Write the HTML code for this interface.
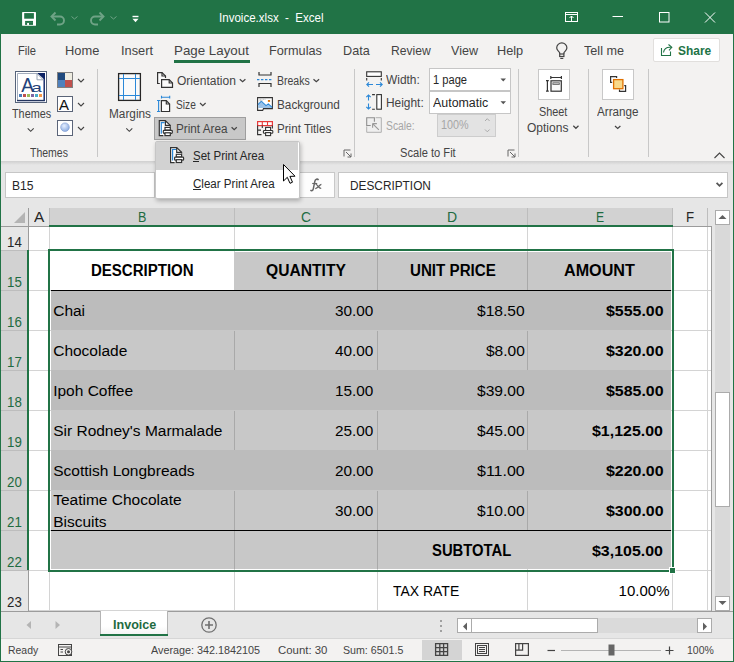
<!DOCTYPE html>
<html><head><meta charset="utf-8"><style>
*{margin:0;padding:0;box-sizing:border-box}
html,body{width:734px;height:662px;overflow:hidden;background:#f3f2f1}
body{position:relative;font-family:"Liberation Sans",sans-serif}
.a{position:absolute}
.t{position:absolute;white-space:pre;line-height:1;font-family:"Liberation Sans",sans-serif;transform-origin:0 0}
svg{position:absolute;overflow:visible}

</style></head><body>
<div class="a" style="left:0px;top:0px;width:734px;height:662px;background:#f3f2f1"></div>
<div class="a" style="left:0px;top:0px;width:734px;height:34px;background:#217346"></div>
<div class="a" style="left:174px;top:60px;width:76px;height:3px;background:#217346"></div>
<div class="a" style="left:653px;top:38px;width:67px;height:24px;background:#fff;border:1px solid #e1dfdd;border-radius:2px"></div>
<div class="a" style="left:97px;top:69px;width:1px;height:88px;background:#c8c8c8"></div>
<div class="a" style="left:354px;top:69px;width:1px;height:88px;background:#c8c8c8"></div>
<div class="a" style="left:518px;top:69px;width:1px;height:88px;background:#c8c8c8"></div>
<div class="a" style="left:588px;top:69px;width:1px;height:88px;background:#c8c8c8"></div>
<div class="a" style="left:648px;top:69px;width:1px;height:88px;background:#c8c8c8"></div>
<div class="a" style="left:1px;top:161px;width:732px;height:47px;background:#e6e6e6"></div>
<div class="a" style="left:1px;top:161px;width:732px;height:4px;background:linear-gradient(#cfcfcf,#e6e6e6)"></div>
<div class="a" style="left:5px;top:172px;width:150px;height:26px;background:#fff;border:1px solid #c6c6c6"></div>
<div class="a" style="left:299px;top:172px;width:36px;height:26px;background:#fdfdfd;border:1px solid #c8c8c8"></div>
<div class="a" style="left:338px;top:172px;width:390px;height:26px;background:#fff;border:1px solid #c6c6c6"></div>
<div class="a" style="left:1px;top:208px;width:711px;height:403px;background:#fff"></div>
<div class="a" style="left:1px;top:208px;width:711px;height:18px;background:#e6e6e6"></div>
<div class="a" style="left:49px;top:208px;width:623px;height:18px;background:#d2d2d2"></div>
<div class="a" style="left:1px;top:226px;width:27px;height:385px;background:#e6e6e6"></div>
<div class="a" style="left:1px;top:250px;width:27px;height:320px;background:#d2d2d2"></div>
<div class="a" style="left:29px;top:250px;width:682px;height:1px;background:#d4d4d4"></div>
<div class="a" style="left:29px;top:290px;width:682px;height:1px;background:#d4d4d4"></div>
<div class="a" style="left:29px;top:330px;width:682px;height:1px;background:#d4d4d4"></div>
<div class="a" style="left:29px;top:370px;width:682px;height:1px;background:#d4d4d4"></div>
<div class="a" style="left:29px;top:410px;width:682px;height:1px;background:#d4d4d4"></div>
<div class="a" style="left:29px;top:450px;width:682px;height:1px;background:#d4d4d4"></div>
<div class="a" style="left:29px;top:490px;width:682px;height:1px;background:#d4d4d4"></div>
<div class="a" style="left:29px;top:530px;width:682px;height:1px;background:#d4d4d4"></div>
<div class="a" style="left:29px;top:570px;width:682px;height:1px;background:#d4d4d4"></div>
<div class="a" style="left:29px;top:610px;width:682px;height:1px;background:#d4d4d4"></div>
<div class="a" style="left:49px;top:227px;width:1px;height:384px;background:#d4d4d4"></div>
<div class="a" style="left:234px;top:227px;width:1px;height:384px;background:#d4d4d4"></div>
<div class="a" style="left:377px;top:227px;width:1px;height:384px;background:#d4d4d4"></div>
<div class="a" style="left:527px;top:227px;width:1px;height:384px;background:#d4d4d4"></div>
<div class="a" style="left:672px;top:227px;width:1px;height:384px;background:#d4d4d4"></div>
<div class="a" style="left:707px;top:227px;width:1px;height:384px;background:#d4d4d4"></div>
<div class="a" style="left:49px;top:208px;width:1px;height:18px;background:#bdbdbd"></div>
<div class="a" style="left:234px;top:208px;width:1px;height:18px;background:#bdbdbd"></div>
<div class="a" style="left:377px;top:208px;width:1px;height:18px;background:#bdbdbd"></div>
<div class="a" style="left:527px;top:208px;width:1px;height:18px;background:#bdbdbd"></div>
<div class="a" style="left:672px;top:208px;width:1px;height:18px;background:#bdbdbd"></div>
<div class="a" style="left:707px;top:208px;width:1px;height:18px;background:#bdbdbd"></div>
<div class="a" style="left:1px;top:250px;width:27px;height:1px;background:#bdbdbd"></div>
<div class="a" style="left:1px;top:290px;width:27px;height:1px;background:#bdbdbd"></div>
<div class="a" style="left:1px;top:330px;width:27px;height:1px;background:#bdbdbd"></div>
<div class="a" style="left:1px;top:370px;width:27px;height:1px;background:#bdbdbd"></div>
<div class="a" style="left:1px;top:410px;width:27px;height:1px;background:#bdbdbd"></div>
<div class="a" style="left:1px;top:450px;width:27px;height:1px;background:#bdbdbd"></div>
<div class="a" style="left:1px;top:490px;width:27px;height:1px;background:#bdbdbd"></div>
<div class="a" style="left:1px;top:530px;width:27px;height:1px;background:#bdbdbd"></div>
<div class="a" style="left:1px;top:570px;width:27px;height:1px;background:#bdbdbd"></div>
<div class="a" style="left:1px;top:226px;width:711px;height:1px;background:#9b9b9b"></div>
<div class="a" style="left:28px;top:208px;width:1px;height:403px;background:#9b9b9b"></div>
<div class="a" style="left:711px;top:226px;width:1px;height:385px;background:#9b9b9b"></div>
<svg style="left:14px;top:212px" width="11" height="11"><path d="M11 0 L11 11 L0 11 Z" fill="#b4b4b4"/></svg>
<div class="a" style="left:51px;top:252px;width:620px;height:38px;background:#c8c8c8"></div>
<div class="a" style="left:51px;top:252px;width:183px;height:38px;background:#fff"></div>
<div class="a" style="left:51px;top:290px;width:620px;height:40px;background:#bcbcbc"></div>
<div class="a" style="left:51px;top:330px;width:620px;height:40px;background:#c8c8c8"></div>
<div class="a" style="left:51px;top:370px;width:620px;height:40px;background:#bcbcbc"></div>
<div class="a" style="left:51px;top:410px;width:620px;height:40px;background:#c8c8c8"></div>
<div class="a" style="left:51px;top:450px;width:620px;height:40px;background:#bcbcbc"></div>
<div class="a" style="left:51px;top:490px;width:620px;height:40px;background:#c8c8c8"></div>
<div class="a" style="left:51px;top:530px;width:620px;height:39px;background:#c8c8c8"></div>
<div class="a" style="left:377px;top:252px;width:1px;height:38px;background:#a9a9a9"></div>
<div class="a" style="left:527px;top:252px;width:1px;height:38px;background:#a9a9a9"></div>
<div class="a" style="left:234px;top:331px;width:1px;height:39px;background:#a9a9a9"></div>
<div class="a" style="left:377px;top:331px;width:1px;height:39px;background:#a9a9a9"></div>
<div class="a" style="left:527px;top:331px;width:1px;height:39px;background:#a9a9a9"></div>
<div class="a" style="left:234px;top:411px;width:1px;height:39px;background:#a9a9a9"></div>
<div class="a" style="left:377px;top:411px;width:1px;height:39px;background:#a9a9a9"></div>
<div class="a" style="left:527px;top:411px;width:1px;height:39px;background:#a9a9a9"></div>
<div class="a" style="left:234px;top:491px;width:1px;height:39px;background:#a9a9a9"></div>
<div class="a" style="left:377px;top:491px;width:1px;height:39px;background:#a9a9a9"></div>
<div class="a" style="left:527px;top:491px;width:1px;height:39px;background:#a9a9a9"></div>
<div class="a" style="left:234px;top:531px;width:1px;height:38px;background:#a9a9a9"></div>
<div class="a" style="left:377px;top:531px;width:1px;height:38px;background:#a9a9a9"></div>
<div class="a" style="left:51px;top:290px;width:620px;height:1px;background:#000"></div>
<div class="a" style="left:51px;top:530px;width:620px;height:1px;background:#000"></div>
<div class="a" style="left:48px;top:249px;width:626px;height:2px;background:#217346"></div>
<div class="a" style="left:48px;top:570px;width:626px;height:2px;background:#217346"></div>
<div class="a" style="left:48px;top:249px;width:2px;height:323px;background:#217346"></div>
<div class="a" style="left:672px;top:249px;width:2px;height:323px;background:#217346"></div>
<div class="a" style="left:49px;top:225px;width:624px;height:2px;background:#217346"></div>
<div class="a" style="left:27px;top:250px;width:2px;height:320px;background:#217346"></div>
<div class="a" style="left:669px;top:567px;width:7px;height:7px;background:#217346;border:1px solid #fff"></div>
<div class="a" style="left:712px;top:208px;width:21px;height:403px;background:#e6e6e6"></div>
<div class="a" style="left:715px;top:225px;width:15px;height:372px;background:#d9d9d9"></div>
<div class="a" style="left:715px;top:210px;width:15px;height:15px;background:#fff;border:1px solid #ababab"></div>
<div class="a" style="left:715px;top:596px;width:15px;height:15px;background:#fff;border:1px solid #ababab"></div>
<div class="a" style="left:715px;top:392px;width:15px;height:115px;background:#fff;border:1px solid #ababab"></div>
<svg style="left:718px;top:214px" width="9" height="6"><path d="M0.5 5 L4.5 1 L8.5 5 Z" fill="#606060"/></svg>
<svg style="left:718px;top:600px" width="9" height="6"><path d="M0.5 1 L4.5 5 L8.5 1 Z" fill="#606060"/></svg>
<div class="a" style="left:1px;top:611px;width:732px;height:28px;background:#e6e6e6"></div>
<div class="a" style="left:1px;top:611px;width:732px;height:1px;background:#9c9c9c"></div>
<div class="a" style="left:100px;top:611px;width:68px;height:25px;background:linear-gradient(#fff 60%,#f0f0f0);border-left:1px solid #b4b4b4;border-right:1px solid #b4b4b4"></div>
<div class="a" style="left:100px;top:634px;width:68px;height:2px;background:#217346"></div>
<svg style="left:26px;top:621px" width="6" height="8"><path d="M5 0 L0.5 4 L5 8 Z" fill="#b4b4b4"/></svg>
<svg style="left:55px;top:621px" width="6" height="8"><path d="M0.5 0 L5 4 L0.5 8 Z" fill="#b4b4b4"/></svg>
<svg style="left:201px;top:617px" width="16" height="16"><circle cx="8" cy="8" r="7.2" fill="none" stroke="#707070" stroke-width="1.3"/><path d="M8 4 V12 M4 8 H12" stroke="#707070" stroke-width="1.6"/></svg>
<div class="a" style="left:440px;top:620px;width:2px;height:2px;background:#a0a0a0"></div>
<div class="a" style="left:440px;top:625px;width:2px;height:2px;background:#a0a0a0"></div>
<div class="a" style="left:440px;top:630px;width:2px;height:2px;background:#a0a0a0"></div>
<div class="a" style="left:457px;top:618px;width:255px;height:15px;background:#dadada"></div>
<div class="a" style="left:457px;top:618px;width:15px;height:15px;background:#fff;border:1px solid #ababab"></div>
<div class="a" style="left:697px;top:618px;width:15px;height:15px;background:#fff;border:1px solid #ababab"></div>
<div class="a" style="left:471px;top:618px;width:127px;height:15px;background:#fff;border:1px solid #ababab"></div>
<svg style="left:462px;top:622px" width="6" height="9"><path d="M5 0.5 L1 4.5 L5 8.5 Z" fill="#606060"/></svg>
<svg style="left:702px;top:622px" width="6" height="9"><path d="M1 0.5 L5 4.5 L1 8.5 Z" fill="#606060"/></svg>
<div class="a" style="left:1px;top:639px;width:732px;height:22px;background:#f3f2f1"></div>
<div class="a" style="left:1px;top:638px;width:732px;height:1px;background:#d6d6d6"></div>
<div class="a" style="left:422px;top:640px;width:40px;height:20px;background:#d4d4d4"></div>
<div class="a" style="left:154px;top:117px;width:92px;height:23px;background:#c8c8c8;border:1px solid #9e9e9e"></div>
<div class="a" style="left:429px;top:68px;width:82px;height:23px;background:#fff;border:1px solid #c6c6c6"></div>
<div class="a" style="left:429px;top:91px;width:82px;height:23px;background:#fff;border:1px solid #c6c6c6"></div>
<div class="a" style="left:437px;top:114px;width:59px;height:23px;background:#e3e3e3;border:1px solid #cdcdcd"></div>
<div class="t" style="left:219.20px;top:12.04px;font-size:12px;color:#fff;font-weight:400;transform:scaleX(0.9623);">Invoice.xlsx  -  Excel</div>
<div class="t" style="left:17.50px;top:44.10px;font-size:13px;color:#444;font-weight:400;transform:scaleX(0.8591);">File</div>
<div class="t" style="left:65.20px;top:44.10px;font-size:13px;color:#444;font-weight:400;transform:scaleX(0.9888);">Home</div>
<div class="t" style="left:121.00px;top:44.10px;font-size:13px;color:#444;font-weight:400;transform:scaleX(0.9841);">Insert</div>
<div class="t" style="left:174.30px;top:44.10px;font-size:13px;color:#444;font-weight:400;transform:scaleX(1.0258);">Page Layout</div>
<div class="t" style="left:269.00px;top:44.10px;font-size:13px;color:#444;font-weight:400;transform:scaleX(0.9762);">Formulas</div>
<div class="t" style="left:343.10px;top:44.10px;font-size:13px;color:#444;font-weight:400;transform:scaleX(0.9720);">Data</div>
<div class="t" style="left:391.30px;top:44.10px;font-size:13px;color:#444;font-weight:400;transform:scaleX(0.9337);">Review</div>
<div class="t" style="left:451.00px;top:44.10px;font-size:13px;color:#444;font-weight:400;transform:scaleX(0.9659);">View</div>
<div class="t" style="left:497.30px;top:44.10px;font-size:13px;color:#444;font-weight:400;transform:scaleX(0.9794);">Help</div>
<div class="t" style="left:584.00px;top:44.10px;font-size:13px;color:#444;font-weight:400;transform:scaleX(0.9712);">Tell me</div>
<div class="t" style="left:677.60px;top:44.10px;font-size:13px;color:#217346;font-weight:700;transform:scaleX(0.9186);">Share</div>
<div class="t" style="left:12.30px;top:180.02px;font-size:12.5px;color:#262626;font-weight:400;transform:scaleX(0.9708);">B15</div>
<div class="t" style="left:350.30px;top:180.22px;font-size:12.5px;color:#262626;font-weight:400;transform:scaleX(0.9469);">DESCRIPTION</div>
<div class="t" style="left:34.30px;top:210.15px;font-size:14px;color:#262626;font-weight:400;transform:scaleX(1.1023);">A</div>
<div class="t" style="left:137.90px;top:210.15px;font-size:14px;color:#1e6b41;font-weight:400;transform:scaleX(0.8990);">B</div>
<div class="t" style="left:301.30px;top:210.15px;font-size:14px;color:#1e6b41;font-weight:400;transform:scaleX(0.9877);">C</div>
<div class="t" style="left:447.00px;top:210.15px;font-size:14px;color:#1e6b41;font-weight:400;">D</div>
<div class="t" style="left:596.40px;top:210.15px;font-size:14px;color:#1e6b41;font-weight:400;transform:scaleX(0.8669);">E</div>
<div class="t" style="left:686.20px;top:210.15px;font-size:14px;color:#262626;font-weight:400;transform:scaleX(0.9460);">F</div>
<div class="t" style="left:7.20px;top:235.15px;font-size:14px;color:#262626;font-weight:400;transform:scaleX(0.9501);">14</div>
<div class="t" style="left:7.20px;top:274.95px;font-size:14px;color:#1e6b41;font-weight:400;transform:scaleX(0.9501);">15</div>
<div class="t" style="left:7.20px;top:314.95px;font-size:14px;color:#1e6b41;font-weight:400;transform:scaleX(0.9501);">16</div>
<div class="t" style="left:7.20px;top:354.95px;font-size:14px;color:#1e6b41;font-weight:400;transform:scaleX(0.9501);">17</div>
<div class="t" style="left:7.20px;top:394.95px;font-size:14px;color:#1e6b41;font-weight:400;transform:scaleX(0.9501);">18</div>
<div class="t" style="left:7.20px;top:434.95px;font-size:14px;color:#1e6b41;font-weight:400;transform:scaleX(0.9501);">19</div>
<div class="t" style="left:7.20px;top:474.95px;font-size:14px;color:#1e6b41;font-weight:400;transform:scaleX(0.9501);">20</div>
<div class="t" style="left:7.20px;top:514.95px;font-size:14px;color:#1e6b41;font-weight:400;transform:scaleX(0.9501);">21</div>
<div class="t" style="left:7.20px;top:554.95px;font-size:14px;color:#1e6b41;font-weight:400;transform:scaleX(0.9501);">22</div>
<div class="t" style="left:7.20px;top:594.95px;font-size:14px;color:#262626;font-weight:400;transform:scaleX(0.9501);">23</div>
<div class="t" style="left:90.90px;top:263.26px;font-size:16px;color:#000;font-weight:700;transform:scaleX(0.9383);">DESCRIPTION</div>
<div class="t" style="left:266.40px;top:263.36px;font-size:16px;color:#000;font-weight:700;transform:scaleX(0.9770);">QUANTITY</div>
<div class="t" style="left:409.70px;top:263.36px;font-size:16px;color:#000;font-weight:700;transform:scaleX(0.9463);">UNIT PRICE</div>
<div class="t" style="left:564.40px;top:263.36px;font-size:16px;color:#000;font-weight:700;transform:scaleX(1.0097);">AMOUNT</div>
<div class="t" style="left:53.20px;top:302.68px;font-size:15.5px;color:#000;font-weight:400;">Chai</div>
<div class="t" style="left:335.40px;top:302.93px;font-size:15.2px;color:#000;font-weight:400;transform:scaleX(1.0101);">30.00</div>
<div class="t" style="left:476.60px;top:302.85px;font-size:15.3px;color:#000;font-weight:400;transform:scaleX(1.0193);">$18.50</div>
<div class="t" style="left:605.60px;top:302.68px;font-size:15.5px;color:#000;font-weight:700;transform:scaleX(1.0280);">$555.00</div>
<div class="t" style="left:53.20px;top:342.68px;font-size:15.5px;color:#000;font-weight:400;">Chocolade</div>
<div class="t" style="left:335.40px;top:342.93px;font-size:15.2px;color:#000;font-weight:400;transform:scaleX(1.0101);">40.00</div>
<div class="t" style="left:485.50px;top:342.85px;font-size:15.3px;color:#000;font-weight:400;transform:scaleX(1.0136);">$8.00</div>
<div class="t" style="left:605.60px;top:342.68px;font-size:15.5px;color:#000;font-weight:700;transform:scaleX(1.0280);">$320.00</div>
<div class="t" style="left:53.20px;top:382.68px;font-size:15.5px;color:#000;font-weight:400;">Ipoh Coffee</div>
<div class="t" style="left:335.40px;top:382.93px;font-size:15.2px;color:#000;font-weight:400;transform:scaleX(1.0101);">15.00</div>
<div class="t" style="left:476.60px;top:382.85px;font-size:15.3px;color:#000;font-weight:400;transform:scaleX(1.0193);">$39.00</div>
<div class="t" style="left:605.60px;top:382.68px;font-size:15.5px;color:#000;font-weight:700;transform:scaleX(1.0280);">$585.00</div>
<div class="t" style="left:53.20px;top:422.68px;font-size:15.5px;color:#000;font-weight:400;">Sir Rodney's Marmalade</div>
<div class="t" style="left:335.40px;top:422.93px;font-size:15.2px;color:#000;font-weight:400;transform:scaleX(1.0101);">25.00</div>
<div class="t" style="left:476.60px;top:422.85px;font-size:15.3px;color:#000;font-weight:400;transform:scaleX(1.0193);">$45.00</div>
<div class="t" style="left:592.20px;top:422.68px;font-size:15.5px;color:#000;font-weight:700;transform:scaleX(1.0295);">$1,125.00</div>
<div class="t" style="left:53.20px;top:462.68px;font-size:15.5px;color:#000;font-weight:400;">Scottish Longbreads</div>
<div class="t" style="left:335.40px;top:462.93px;font-size:15.2px;color:#000;font-weight:400;transform:scaleX(1.0101);">20.00</div>
<div class="t" style="left:476.60px;top:462.85px;font-size:15.3px;color:#000;font-weight:400;transform:scaleX(1.0448);">$11.00</div>
<div class="t" style="left:605.60px;top:462.68px;font-size:15.5px;color:#000;font-weight:700;transform:scaleX(1.0280);">$220.00</div>
<div class="t" style="left:335.40px;top:502.93px;font-size:15.2px;color:#000;font-weight:400;transform:scaleX(1.0101);">30.00</div>
<div class="t" style="left:476.60px;top:502.85px;font-size:15.3px;color:#000;font-weight:400;transform:scaleX(1.0193);">$10.00</div>
<div class="t" style="left:605.60px;top:502.68px;font-size:15.5px;color:#000;font-weight:700;transform:scaleX(1.0280);">$300.00</div>
<div class="t" style="left:53.20px;top:492.38px;font-size:15.5px;color:#000;font-weight:400;">Teatime Chocolate</div>
<div class="t" style="left:53.20px;top:514.38px;font-size:15.5px;color:#000;font-weight:400;">Biscuits</div>
<div class="t" style="left:432.00px;top:543.16px;font-size:16px;color:#000;font-weight:700;transform:scaleX(0.9261);">SUBTOTAL</div>
<div class="t" style="left:592.20px;top:542.68px;font-size:15.5px;color:#000;font-weight:700;transform:scaleX(1.0295);">$3,105.00</div>
<div class="t" style="left:393.30px;top:583.10px;font-size:15px;color:#000;font-weight:400;transform:scaleX(0.9308);">TAX RATE</div>
<div class="t" style="left:618.62px;top:583.10px;font-size:15px;color:#000;font-weight:400;">10.00%</div>
<div class="t" style="left:112.50px;top:617.80px;font-size:13px;color:#1e6b41;font-weight:700;transform:scaleX(0.9666);">Invoice</div>
<div class="t" style="left:7.60px;top:645.37px;font-size:11.5px;color:#444;font-weight:400;transform:scaleX(0.9083);">Ready</div>
<div class="t" style="left:151.40px;top:645.37px;font-size:11.5px;color:#444;font-weight:400;transform:scaleX(0.9391);">Average: 342.1842105</div>
<div class="t" style="left:277.50px;top:645.37px;font-size:11.5px;color:#444;font-weight:400;transform:scaleX(0.9905);">Count: 30</div>
<div class="t" style="left:343.20px;top:645.37px;font-size:11.5px;color:#444;font-weight:400;transform:scaleX(0.9246);">Sum: 6501.5</div>
<div class="t" style="left:687.00px;top:645.37px;font-size:11.5px;color:#444;font-weight:400;transform:scaleX(0.9109);">100%</div>
<div class="t" style="left:11.70px;top:108.02px;font-size:12.5px;color:#444;font-weight:400;transform:scaleX(0.8659);">Themes</div>
<div class="t" style="left:29.60px;top:147.04px;font-size:12px;color:#444;font-weight:400;transform:scaleX(0.8741);">Themes</div>
<div class="t" style="left:108.70px;top:107.92px;font-size:12.5px;color:#444;font-weight:400;transform:scaleX(0.9445);">Margins</div>
<div class="t" style="left:176.60px;top:75.22px;font-size:12.5px;color:#444;font-weight:400;transform:scaleX(0.9631);">Orientation</div>
<div class="t" style="left:176.20px;top:99.32px;font-size:12.5px;color:#444;font-weight:400;transform:scaleX(0.8139);">Size</div>
<div class="t" style="left:176.20px;top:122.92px;font-size:12.5px;color:#444;font-weight:400;transform:scaleX(0.9382);">Print Area</div>
<div class="t" style="left:276.80px;top:75.32px;font-size:12.5px;color:#444;font-weight:400;transform:scaleX(0.8405);">Breaks</div>
<div class="t" style="left:276.80px;top:99.32px;font-size:12.5px;color:#444;font-weight:400;transform:scaleX(0.9413);">Background</div>
<div class="t" style="left:276.80px;top:123.32px;font-size:12.5px;color:#444;font-weight:400;transform:scaleX(0.9287);">Print Titles</div>
<div class="t" style="left:385.50px;top:74.02px;font-size:12.5px;color:#444;font-weight:400;transform:scaleX(0.9538);">Width:</div>
<div class="t" style="left:385.50px;top:96.62px;font-size:12.5px;color:#444;font-weight:400;transform:scaleX(0.9518);">Height:</div>
<div class="t" style="left:385.50px;top:119.52px;font-size:12.5px;color:#a6a6a6;font-weight:400;transform:scaleX(0.8259);">Scale:</div>
<div class="t" style="left:433.20px;top:73.82px;font-size:12.5px;color:#262626;font-weight:400;transform:scaleX(0.8893);">1 page</div>
<div class="t" style="left:432.50px;top:96.52px;font-size:12.5px;color:#262626;font-weight:400;transform:scaleX(0.9929);">Automatic</div>
<div class="t" style="left:440.70px;top:119.32px;font-size:12.5px;color:#a6a6a6;font-weight:400;transform:scaleX(0.8629);">100%</div>
<div class="t" style="left:400.30px;top:147.04px;font-size:12px;color:#444;font-weight:400;transform:scaleX(0.9279);">Scale to Fit</div>
<div class="t" style="left:539.30px;top:106.02px;font-size:12.5px;color:#444;font-weight:400;transform:scaleX(0.8692);">Sheet</div>
<div class="t" style="left:527.40px;top:121.82px;font-size:12.5px;color:#444;font-weight:400;transform:scaleX(0.9607);">Options</div>
<div class="t" style="left:597.10px;top:106.02px;font-size:12.5px;color:#444;font-weight:400;transform:scaleX(0.9352);">Arrange</div>
<svg style="left:0;top:0" width="734" height="662"><rect x="22.1" y="11.9" width="13.9" height="13.9" rx="0.6" fill="#fff"/><rect x="24.2" y="13.1" width="9.7" height="5.6" fill="#217346"/><rect x="25.1" y="20.9" width="7.9" height="2" fill="#217346"/><rect x="25.1" y="22.8" width="2" height="2.1" fill="#217346"/><rect x="29" y="22.8" width="4" height="2.1" fill="#217346"/><path d="M52 16.5 H60 A4 4 0 0 1 60 24.5 H57" fill="none" stroke="#6fa386" stroke-width="1.9"/><path d="M55.5 12.5 L51.5 16.5 L55.5 20.5" fill="none" stroke="#6fa386" stroke-width="1.9"/><path d="M71.5 16.5 L74.5 19 L77.5 16.5" fill="none" stroke="#6fa386" stroke-width="1"/><path d="M103 16.5 H95 A4 4 0 0 0 95 24.5 H98" fill="none" stroke="#6fa386" stroke-width="1.9"/><path d="M99.5 12.5 L103.5 16.5 L99.5 20.5" fill="none" stroke="#6fa386" stroke-width="1.9"/><path d="M110.5 16.5 L113.5 19 L116.5 16.5" fill="none" stroke="#6fa386" stroke-width="1"/><rect x="132.5" y="15.8" width="6" height="1.4" fill="#fff"/><path d="M132.5 18.8 H138.5 L135.5 22.2 Z" fill="#fff"/><rect x="565.5" y="12.5" width="12" height="9" fill="none" stroke="#fff" stroke-width="1"/><path d="M566 14.5 H577" stroke="#fff" stroke-width="1"/><path d="M571.5 22 V16 M569.5 18 L571.5 16 L573.5 18" fill="none" stroke="#fff" stroke-width="1"/><path d="M612.5 16.5 H623" stroke="#fff" stroke-width="1"/><rect x="659.5" y="12.5" width="9.5" height="9.5" fill="none" stroke="#fff" stroke-width="1"/><path d="M705 12.5 L715 22.5 M715 12.5 L705 22.5" stroke="#fff" stroke-width="1"/><path d="M559.7 53.9 V52.9 C559.4 51.6 556.7 50.4 556.7 48 A5.1 5.1 0 0 1 566.9 48 C566.9 50.4 564.2 51.6 563.9 52.9 V53.9" fill="none" stroke="#444" stroke-width="1.2"/><rect x="559.7" y="54" width="4.2" height="2.5" fill="none" stroke="#444" stroke-width="1.2"/><path d="M560.3 58.4 H563.3" stroke="#444" stroke-width="1.2"/><path d="M661.5 48 V55.5 H670.5 V51.5" fill="none" stroke="#217346" stroke-width="1.1"/><path d="M663.5 52.5 C664 48.5 667 47 671 47.3" fill="none" stroke="#217346" stroke-width="1.1"/><path d="M668.5 44.5 L671.8 47.3 L669 50.3" fill="none" stroke="#217346" stroke-width="1.1"/><rect x="15.5" y="71.5" width="31" height="31" fill="#fff" stroke="#56637a" stroke-width="1"/><path d="M17.5 100.5 V73.5 H37" fill="none" stroke="#a3adbd" stroke-width="1"/><path d="M37 73 H45 V80 Z" fill="#0b2163"/><path d="M44.2 73 V100.6 H17" fill="none" stroke="#0b2163" stroke-width="1.4"/><path d="M17 100.3 H44" stroke="#33415c" stroke-width="0.8"/><path d="M37 73.5 V79.8 H43.2 Z" fill="#fff" stroke="#8b97aa" stroke-width="0.9"/><text x="21.3" y="91.6" font-family="Liberation Sans" font-size="19.5" fill="#23427a" textLength="12.6" lengthAdjust="spacingAndGlyphs">A</text><text x="31.2" y="91.6" font-family="Liberation Sans" font-size="13" fill="#23427a" textLength="10.6" lengthAdjust="spacingAndGlyphs">a</text><rect x="19.00" y="94" width="3" height="3" fill="#4a7ebb"/><rect x="23.00" y="94" width="3" height="3" fill="#c0504d"/><rect x="27.00" y="94" width="3" height="3" fill="#9bbb59"/><rect x="31.00" y="94" width="3" height="3" fill="#8064a2"/><rect x="35.00" y="94" width="3" height="3" fill="#4bacc6"/><rect x="39.00" y="94" width="3" height="3" fill="#f79646"/><rect x="57.5" y="72.5" width="15" height="15" fill="#eeece1" stroke="#808080"/><rect x="58" y="73" width="7" height="7" fill="#1f497d"/><rect x="58" y="80" width="7" height="7" fill="#4f81bd"/><rect x="65" y="80" width="7" height="7" fill="#c0504d"/><rect x="57.5" y="96.5" width="15" height="15" fill="#fff" stroke="#5a6478"/><text x="58.9" y="109.7" font-family="Liberation Sans" font-size="14" fill="#111" textLength="10" lengthAdjust="spacingAndGlyphs">A</text><rect x="57.5" y="120.5" width="15" height="15" fill="#fff" stroke="#5a6478"/><defs><radialGradient id="eg" cx="0.4" cy="0.35" r="0.7"><stop offset="0" stop-color="#e6efff"/><stop offset="1" stop-color="#86a8e0"/></radialGradient></defs><circle cx="65" cy="127.2" r="4.3" fill="url(#eg)" stroke="#7d9ad0" stroke-width="0.6"/><path d="M78 79 L81.0 82 L84 79" fill="none" stroke="#444" stroke-width="1.1"/><path d="M78 103 L81.0 106 L84 103" fill="none" stroke="#444" stroke-width="1.1"/><path d="M78 127 L81.0 130 L84 127" fill="none" stroke="#444" stroke-width="1.1"/><path d="M27.7 128.3 L30.7 131.3 L33.7 128.3" fill="none" stroke="#444" stroke-width="1.1"/><rect x="118.6" y="73.6" width="21.8" height="26.8" fill="#fafafa" stroke="#262626" stroke-width="1.3"/><path d="M123.5 74 V100 M135.5 74 V100 M119 78.5 H140 M119 95.5 H140" stroke="#2b88d8" stroke-width="1"/><path d="M126.3 128.3 L129.3 131.3 L132.3 128.3" fill="none" stroke="#444" stroke-width="1.1"/><path d="M159.8 83.5 H157.6 V72.6 H162 L165.5 76 V78" fill="#fafafa" stroke="#333" stroke-width="1.2"/><path d="M162 72.6 V76 H165.5" fill="none" stroke="#333" stroke-width="1.2"/><path d="M161.6 79.7 H169.2 L172.5 83 V87.4 H161.6 Z" fill="#fafafa" stroke="#333" stroke-width="1.2"/><path d="M169.2 79.7 V83 H172.5" fill="none" stroke="#333" stroke-width="1.2"/><path d="M239.8 79.2 L242.60000000000002 81.8 L245.4 79.2" fill="none" stroke="#444" stroke-width="1.2"/><path d="M158.6 100.5 V111.5 M157 100.5 H160.2 M157 111.5 H160.2" stroke="#2b88d8" stroke-width="1.1"/><path d="M161.5 97.2 H169.7 M161.5 95.8 V98.6 M169.7 95.8 V98.6" stroke="#2b88d8" stroke-width="1.1"/><path d="M161.4 100.7 H166.3 L169.6 104 V111.5 H161.4 Z" fill="#fafafa" stroke="#333" stroke-width="1.2"/><path d="M166.3 100.7 V104 H169.6" fill="none" stroke="#333" stroke-width="1.2"/><path d="M200 103 L202.8 105.6 L205.6 103" fill="none" stroke="#444" stroke-width="1.2"/><g transform="translate(-11.3,-26.9)"><path d="M174.6 162.6 H170.6 V147.6 H176.7 L181.6 152.3 V153.6" fill="#fff" stroke="#333" stroke-width="1.2"/><path d="M176.7 147.6 V152.3 H181.6" fill="none" stroke="#333" stroke-width="1.2"/><path d="M172.6 160.6 V149.5 H176" fill="none" stroke="#2b88d8" stroke-width="1.2"/><rect x="176.3" y="154.3" width="5.3" height="2.7" fill="#fff" stroke="#333" stroke-width="1.2"/><rect x="174.6" y="157.2" width="9" height="3" rx="0.8" fill="#fff" stroke="#333" stroke-width="1.2"/><rect x="176.3" y="159.7" width="5.3" height="2.8" fill="#fff" stroke="#333" stroke-width="1.2"/></g><path d="M231.6 127.2 L234.2 129.7 L236.79999999999998 127.2" fill="none" stroke="#444" stroke-width="1.2"/><path d="M259 72 V75 H271 V72 M259 87 V83.5 H271 V87" fill="none" stroke="#333" stroke-width="1.2"/><path d="M257 79.6 H272.5" stroke="#2b88d8" stroke-width="1.2" stroke-dasharray="2.4 1.6"/><path d="M313.5 79.2 L316.3 81.8 L319.1 79.2" fill="none" stroke="#444" stroke-width="1.2"/><path d="M257.6 108.6 V97.6 H272.4 V108.6 H263.5 L262.7 110.4 H257.6 Z" fill="#fff" stroke="#333" stroke-width="1.1"/><path d="M258.2 104.5 L261.3 101.2 L266 105.6 L268.3 103.9 L272 107.2 V108 H258.2 Z" fill="#9cc3e8"/><path d="M258 104.6 L261.3 101.2 L266 105.6 L268.3 103.9 L272.2 107.4" fill="none" stroke="#2b88d8" stroke-width="1.1"/><rect x="267.9" y="100" width="2.2" height="1.9" fill="#e07a10"/><path d="M259.5 99.2 H266 M259.5 100.8 H263" stroke="#aaa" stroke-width="0.8" stroke-dasharray="2 1"/><rect x="257.6" y="121.6" width="14.8" height="4" fill="#fff" stroke="#e83a3a" stroke-width="1.2"/><path d="M262.3 121.6 V125.6 M267.5 121.6 V125.6" stroke="#e83a3a" stroke-width="1.1"/><path d="M257.6 125.6 V134.6 H261.5 M257.6 130.1 H261 M262.3 125.6 V128 M272.4 125.6 V128.6" fill="none" stroke="#333" stroke-width="1.1"/><rect x="265.6" y="127.4" width="5" height="3.4" fill="#fafafa" stroke="#333" stroke-width="1.1"/><rect x="263.4" y="130.5" width="9.4" height="2.8" rx="0.8" fill="#fafafa" stroke="#333" stroke-width="1.1"/><rect x="265.6" y="132.6" width="5" height="3" fill="#fafafa" stroke="#333" stroke-width="1.1"/><path d="M344.0 156.5 V150.0 H350.5" fill="none" stroke="#666" stroke-width="1"/><path d="M346.0 152.0 L351.0 157.0 M347.5 157.0 H351.0 V153.5" fill="none" stroke="#666" stroke-width="1"/><path d="M508.0 156.5 V150.0 H514.5" fill="none" stroke="#666" stroke-width="1"/><path d="M510.0 152.0 L515.0 157.0 M511.5 157.0 H515.0 V153.5" fill="none" stroke="#666" stroke-width="1"/><rect x="366.7" y="71.8" width="14.6" height="4.6" fill="#fff" stroke="#333" stroke-width="1.1"/><path d="M366.7 78 V80.6 M381.3 78 V80.6" stroke="#333" stroke-width="1.1"/><path d="M367 84.5 H373 M376 84.5 H382 M369 82.3 L366.8 84.5 L369 86.7 M380 82.3 L382.2 84.5 L380 86.7" fill="none" stroke="#2b88d8" stroke-width="1.1"/><rect x="376.8" y="94.6" width="4.6" height="14.6" fill="#fff" stroke="#333" stroke-width="1.1"/><path d="M372.1 94.6 H374.9 M372.1 109.2 H374.9" stroke="#333" stroke-width="1.1"/><path d="M368.5 95 V100.5 M368.5 103.5 V109 M366.3 97.2 L368.5 95 L370.7 97.2 M366.3 106.8 L368.5 109 L370.7 106.8" fill="none" stroke="#2b88d8" stroke-width="1.1"/><rect x="366.7" y="117.7" width="14.6" height="14.6" fill="#efefef"/><path d="M375.6 117.7 H381.3 V132.3 H366.7 V126.4" fill="none" stroke="#b0b0b0" stroke-width="1"/><path d="M370.7 125.5 H366.7 V117.7 H374.4 V121.7" fill="none" stroke="#8f8f8f" stroke-width="1.1"/><path d="M378.9 129.9 L372.8 123.8 M372.6 123.6 H376.9 M372.6 123.6 V127.7" fill="none" stroke="#999" stroke-width="1.1"/><path d="M500.5 78.5 H506 L503.25 81.5 Z M500.5 101.3 H506 L503.25 104.3 Z" fill="#555"/><path d="M485 121 L487.3 118.7 L489.6 121 M485 129.5 L487.3 131.8 L489.6 129.5" fill="none" stroke="#aaa" stroke-width="1"/><rect x="538.5" y="69.5" width="31" height="30" fill="#fff" stroke="#c8c8c8"/><path d="M547.4 80.5 V91.2 M546 80.6 H548.8 M546 91.2 H548.8" stroke="#333" stroke-width="1.2"/><path d="M550.8 77.5 H561.4 M550.8 76 V79 M561.4 76 V79" stroke="#333" stroke-width="1.2"/><rect x="551" y="80.8" width="10.3" height="10.4" fill="#fafafa" stroke="#333" stroke-width="1.2"/><rect x="552.9" y="82.8" width="6.4" height="1.6" fill="#ddd" stroke="#666" stroke-width="0.9"/><path d="M573.3 125.8 L575.9 128.3 L578.5 125.8" fill="none" stroke="#444" stroke-width="1.2"/><rect x="602.5" y="69.5" width="31" height="30" fill="#fff" stroke="#c8c8c8"/><path d="M612.2 82.4 H610.6 V76.7 H616.6 V78.1" fill="none" stroke="#333" stroke-width="1.2"/><path d="M619.5 89.6 V91.4 H625.6 V85.7 H624.2" fill="none" stroke="#333" stroke-width="1.2"/><rect x="613.6" y="79.6" width="9.3" height="9.1" fill="#f8d98a" stroke="#e07000" stroke-width="1.3"/><path d="M615 126 L617.7 128.5 L620.4 126" fill="none" stroke="#444" stroke-width="1.2"/><path d="M714.5 158 L719.5 153 L724.5 158" fill="none" stroke="#444" stroke-width="1.1"/><path d="M318.6 179.9 C317.4 178.6 315.3 178.9 314.8 181.4 L313.3 188.8 C312.9 190.7 311.6 191.1 310.4 190.2" fill="none" stroke="#666" stroke-width="1.5"/><path d="M312.2 183.5 H317.2" stroke="#666" stroke-width="1.1"/><path d="M315.6 184.4 C317.5 184 318.5 188.6 321.2 188.4 M321.4 184.3 C319.5 184.6 317.5 188.8 315.2 188.5" fill="none" stroke="#666" stroke-width="1.25"/><path d="M716.6 182.9 L719.5 185.8 L722.4 182.9" fill="none" stroke="#555" stroke-width="1.8"/><rect x="58.5" y="644.5" width="13" height="11" fill="none" stroke="#444" stroke-width="1"/><path d="M58.5 647 H71.5 M60.5 649.5 H63 M60.5 652 H63" stroke="#444" stroke-width="1"/><circle cx="68.5" cy="651.8" r="3.3" fill="#f3f2f1" stroke="#444"/><circle cx="68.5" cy="651.8" r="1.5" fill="#444"/><path d="M435.6 643 V656 M439.8 643 V656 M443.6 643 V656 M447.6 643 V656 M435 643.6 H448.2 M435 647.6 H448.2 M435 651.6 H448.2 M435 655.4 H448.2" stroke="#444" stroke-width="1.3"/><rect x="475.5" y="643.5" width="13" height="12" fill="none" stroke="#444"/><rect x="477.5" y="645.5" width="9" height="8" fill="none" stroke="#444"/><path d="M479 647.5 H485 M479 649.5 H485 M479 651.5 H485" stroke="#444" stroke-width="1"/><rect x="515.6" y="643.6" width="12.8" height="11.8" fill="none" stroke="#444" stroke-width="1.2"/><path d="M515.6 650.2 H522.6 V643.6 M518.9 643.6 V650.2" fill="none" stroke="#444" stroke-width="1.2"/><path d="M547.5 650.5 H555" stroke="#444" stroke-width="1.2"/><path d="M561 650.5 H661" stroke="#b4b4b4" stroke-width="1"/><rect x="608.5" y="644.5" width="6" height="11" fill="#666"/><path d="M665.5 650.5 H673.5 M669.5 646.5 V654.5" stroke="#444" stroke-width="1.2"/></svg>
<div class="a" style="left:155px;top:141px;width:145px;height:58px;background:#fff;border:1px solid #c6c6c6;border-radius:2px;box-shadow:1px 2px 4px rgba(0,0,0,0.25)"></div>
<div class="a" style="left:156px;top:142px;width:142px;height:28px;background:#d2d2d2"></div>
<div class="a" style="left:193px;top:161px;width:6px;height:1px;background:#262626"></div>
<div class="a" style="left:193px;top:189px;width:8px;height:1px;background:#262626"></div>
<svg style="left:0;top:0" width="734" height="662"><path d="M174.6 162.6 H170.6 V147.6 H176.7 L181.6 152.3 V153.6" fill="#fff" stroke="#333" stroke-width="1.2"/><path d="M176.7 147.6 V152.3 H181.6" fill="none" stroke="#333" stroke-width="1.2"/><path d="M172.6 160.6 V149.5 H176" fill="none" stroke="#2b88d8" stroke-width="1.2"/><rect x="176.3" y="154.3" width="5.3" height="2.7" fill="#fff" stroke="#333" stroke-width="1.2"/><rect x="174.6" y="157.2" width="9" height="3" rx="0.8" fill="#fff" stroke="#333" stroke-width="1.2"/><rect x="176.3" y="159.7" width="5.3" height="2.8" fill="#fff" stroke="#333" stroke-width="1.2"/></svg>
<div class="t" style="left:192.70px;top:149.84px;font-size:12px;color:#262626;font-weight:400;transform:scaleX(0.9602);">Set Print Area</div>
<div class="t" style="left:192.70px;top:178.04px;font-size:12px;color:#262626;font-weight:400;transform:scaleX(0.9645);">Clear Print Area</div>
<svg style="left:0;top:0" width="734" height="662"><path d="M283.5 164.5 V181 L287.3 177.3 L290 183.3 L292.5 182.2 L289.9 176.4 L295 176.2 Z" fill="#fff" stroke="#000" stroke-width="1" stroke-linejoin="round"/></svg>
<div class="a" style="left:0px;top:0px;width:1px;height:662px;background:#217346"></div>
<div class="a" style="left:733px;top:0px;width:1px;height:662px;background:#217346"></div>
<div class="a" style="left:0px;top:661px;width:734px;height:1px;background:#217346"></div>
</body></html>
